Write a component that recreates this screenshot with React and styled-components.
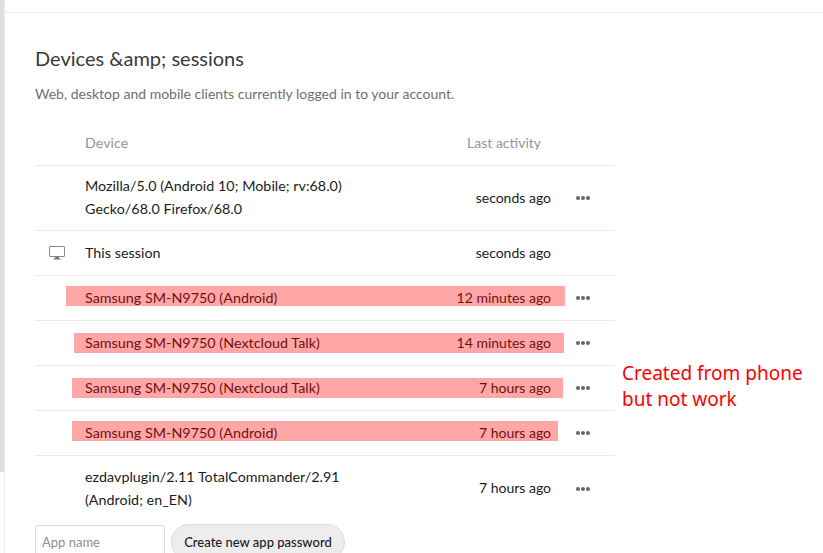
import React from 'react';
import styled, { createGlobalStyle } from 'styled-components';

const GlobalStyle = createGlobalStyle`
  html, body {
    margin: 0;
    height: 553px;
    overflow: hidden;
    background: #fff;
  }
`;

const Page = styled.div`
  display: flex;
  width: 823px;
  height: 553px;
  overflow: hidden;
  position: relative;
  font-family: Lato, "Noto Sans", sans-serif;
  font-size: 14.3px;
  color: #1c1c1c;
`;

const ScrollStrip = styled.div`
  flex: none;
  width: 4px;
  height: 472px;
  background: #dedede;
`;

const Main = styled.div`
  flex: 1;
  border-left: 1px solid #eee;
`;

const TopBar = styled.div`
  height: 12px;
  border-bottom: 1px solid #ebebeb;
`;

const Section = styled.section`
  width: 580px;
  padding: 30px 0 0 30px;
`;

const Title = styled.h2`
  margin: 0;
  font-size: 20px;
  line-height: 30px;
  font-weight: 400;
  color: #3a3a3a;
`;

const Hint = styled.p`
  margin: 11px 0 0;
  font-size: 14px;
  line-height: 20px;
  color: #707070;
`;

const Row = styled.div`
  position: relative;
  box-sizing: border-box;
  display: grid;
  grid-template-columns: 50px 1fr 110px 64px;
  align-items: center;
  height: ${(p) => p.$height}px;
  padding-top: ${(p) => (p.$head ? '17px' : '0')};
  border-bottom: ${(p) => (p.$last ? 'none' : '1px solid #ebebeb')};
`;

const IconCell = styled.div`
  display: flex;
  justify-content: center;
  padding-right: 7px;
`;

const Device = styled.div`
  margin-bottom: 2px;
  line-height: 23px;
  letter-spacing: ${(p) => (p.$head ? '0' : '0.03px')};
  color: ${(p) => (p.$head ? '#959595' : 'inherit')};
`;

const Activity = styled.div`
  margin-bottom: 2px;
  font-size: 14px;
  text-align: right;
  color: ${(p) => (p.$head ? '#959595' : 'inherit')};
  white-space: nowrap;
  padding-right: ${(p) => (p.$head ? '10px' : '0')};
`;

const More = styled.div`
  display: flex;
  gap: 1px;
  padding-left: 25px;
`;

const Dot = styled.span`
  width: 4px;
  height: 4px;
  border-radius: 50%;
  background: #666;
`;

const Highlight = styled.div`
  position: absolute;
  top: ${(p) => p.$top}px;
  left: ${(p) => p.$left}px;
  width: ${(p) => p.$width}px;
  height: 20px;
  background: rgba(255, 0, 0, 0.35);
`;

const FormRow = styled.div`
  display: flex;
  align-items: flex-start;
  gap: 6px;
  margin-top: 4px;
`;

const NameInput = styled.input`
  box-sizing: border-box;
  width: 130px;
  height: 34px;
  padding: 0 6px;
  border: 1px solid #dbdbdb;
  border-radius: 3px;
  font: inherit;
  font-size: 13px;
  background: #fff;
  &::placeholder {
    color: #8f8f8f;
  }
`;

const CreateButton = styled.button`
  box-sizing: border-box;
  width: 174px;
  height: 36px;
  margin-top: -1px;
  padding: 0;
  border: 1px solid #dbdbdb;
  border-radius: 18px;
  background: #ededed;
  color: #1c1c1c;
  font: inherit;
  font-size: 13px;
  font-weight: 500;
`;

const Note = styled.div`
  position: absolute;
  left: 622px;
  top: 360px;
  font-family: "Noto Sans", sans-serif;
  font-size: 19px;
  line-height: 26px;
  color: #ff0000;
`;

const MonitorIcon = () => (
  <svg width="16" height="14" viewBox="0 0 16 14">
    <path d="M1 0.5h14a.5.5 0 0 1 .5.5v9a.5.5 0 0 1-.5.5H1a.5.5 0 0 1-.5-.5V1A.5.5 0 0 1 1 .5z" fill="#fff" stroke="#8a8a8a" />
    <path d="M6 11h4v1.500h1.500V13.500H4.500V12.500H6z" fill="#777" />
  </svg>
);

const sessions = [
  { lines: ['Mozilla/5.0 (Android 10; Mobile; rv:68.0)', 'Gecko/68.0 Firefox/68.0'], time: 'seconds ago', height: 65, more: true },
  { lines: ['This session'], time: 'seconds ago', height: 45, icon: true },
  { lines: ['Samsung SM-N9750 (Android)'], time: '12 minutes ago', height: 45, more: true, mark: { top: 10, left: 31, width: 499 } },
  { lines: ['Samsung SM-N9750 (Nextcloud Talk)'], time: '14 minutes ago', height: 45, more: true, mark: { top: 12, left: 39, width: 490 } },
  { lines: ['Samsung SM-N9750 (Nextcloud Talk)'], time: '7 hours ago', height: 45, more: true, mark: { top: 12, left: 37, width: 491 } },
  { lines: ['Samsung SM-N9750 (Android)'], time: '7 hours ago', height: 45, more: true, mark: { top: 10, left: 37, width: 486 } },
  { lines: ['ezdavplugin/2.11 TotalCommander/2.91', '(Android; en_EN)'], time: '7 hours ago', height: 65, more: true, last: true },
];

export default function App() {
  return (
    <Page>
      <GlobalStyle />
      <ScrollStrip />
      <Main>
        <TopBar />
        <Section>
          <Title>Devices &amp;amp; sessions</Title>
          <Hint>Web, desktop and mobile clients currently logged in to your account.</Hint>
          <Row $height={62} $head>
            <span />
            <Device $head>Device</Device>
            <Activity $head>Last activity</Activity>
            <span />
          </Row>
          {sessions.map((s, i) => (
            <Row key={i} $height={s.height} $last={s.last}>
              <IconCell>{s.icon && <MonitorIcon />}</IconCell>
              <Device>
                {s.lines.map((line) => (
                  <div key={line}>{line}</div>
                ))}
              </Device>
              <Activity>{s.time}</Activity>
              {s.more ? (
                <More>
                  <Dot />
                  <Dot />
                  <Dot />
                </More>
              ) : (
                <span />
              )}
              {s.mark && <Highlight $top={s.mark.top} $left={s.mark.left} $width={s.mark.width} />}
            </Row>
          ))}
          <FormRow>
            <NameInput placeholder="App name" />
            <CreateButton>Create new app password</CreateButton>
          </FormRow>
        </Section>
      </Main>
      <Note>
        Created from phone
        <br />
        but not work
      </Note>
    </Page>
  );
}
